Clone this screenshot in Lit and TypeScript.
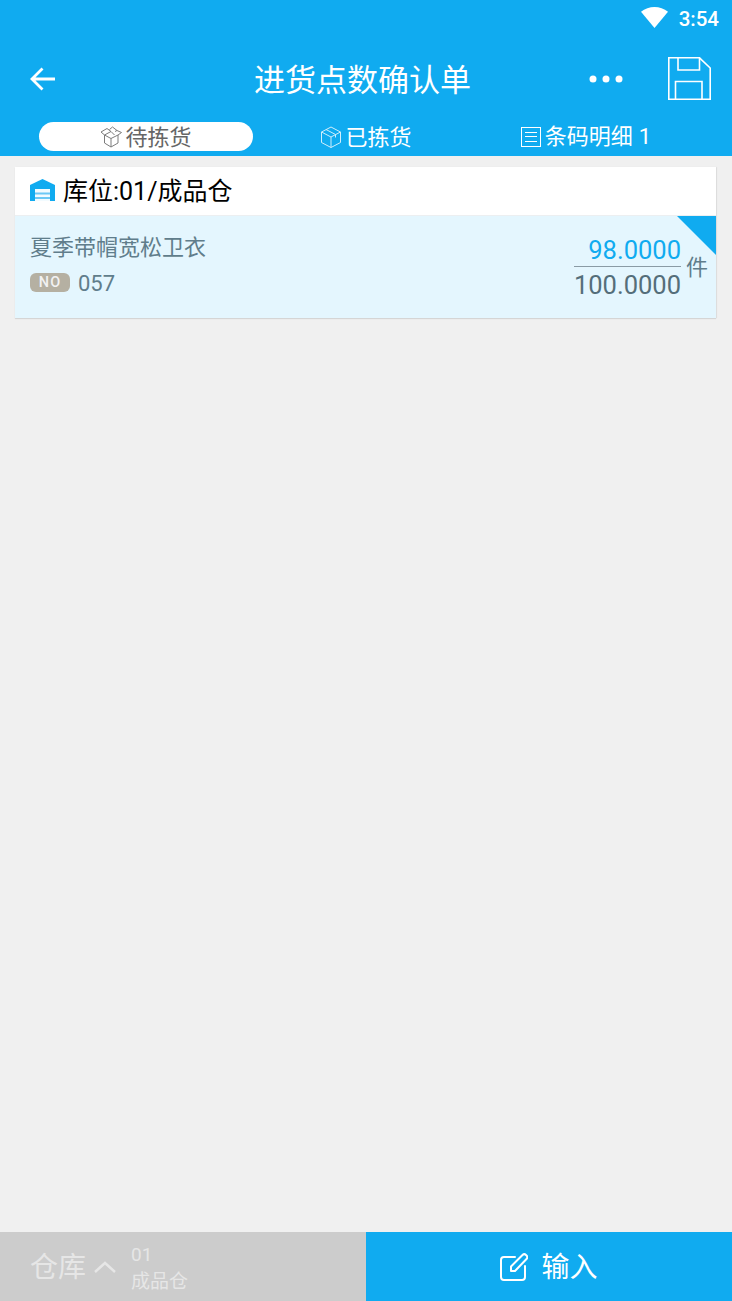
import { LitElement, html, css } from "lit";
import { customElement } from "lit/decorators.js";

const openBox = html`<svg class="tab-icon box-open" viewBox="0 0 22 22" fill="none" stroke="currentColor" stroke-width="1">
  <path d="M4.500 9 11 12.500 18 9M11 12.500V21M4.500 9V17L11 21l7-4V9" />
  <path d="M4.500 9 1 6l6-3.500 4 3-6.500 3.500ZM18 9l3.500-2.500-4.500-2M11 5.500l3.500 3.500M9.500 3.500l3-2.500 4.500 3.500-2 1" />
</svg>`;

const closedBox = html`<svg class="tab-icon box-closed" viewBox="0 0 22 22" fill="none" stroke="currentColor" stroke-width="1">
  <path d="M11 1 20.500 6v10.500L11 21.500 1.500 16.500V6L11 1Z" />
  <path d="M1.500 6 11 11l9.500-5M11 11v10.500M6 3.500l9.500 5v3" />
</svg>`;

const listBox = html`<svg class="tab-icon" viewBox="0 0 20 20" fill="none" stroke="currentColor" stroke-width="1">
  <rect x="0.500" y="0.500" width="19" height="19" />
  <path d="M4 5.500h12M4 9.500h12M4 14.500h12" />
</svg>`;

@customElement("app-root")
export class AppRoot extends LitElement {
  static styles = css`
    :host {
      display: flex;
      flex-direction: column;
      height: 1301px;
      background: #f0f0f0;
      font-family: "Noto Sans CJK SC", Roboto, sans-serif;
      overflow: hidden;
    }
    .top {
      background: #10abf0;
      color: #fff;
      height: 156px;
      flex: none;
      display: flex;
      flex-direction: column;
    }
    .status {
      height: 40px;
      display: flex;
      justify-content: flex-end;
      align-items: center;
      gap: 11px;
      padding-right: 13px;
    }
    .clock {
      font: 500 20.500px Roboto, sans-serif;
      margin-top: -2px;
    }
    .wifi {
      width: 27px;
      height: 21px;
      margin-top: -5px;
    }
    .nav {
      height: 78px;
      position: relative;
      display: flex;
      align-items: center;
      justify-content: center;
    }
    .title {
      font-size: 31px;
      line-height: 44px;
      margin-top: -2px;
      padding-right: 7px;
    }
    .back {
      position: absolute;
      left: 30px;
      top: 27px;
      width: 25px;
      height: 24px;
    }
    .more {
      position: absolute;
      left: 589px;
      top: 34px;
      width: 34px;
      height: 10px;
    }
    .save {
      position: absolute;
      left: 668px;
      top: 17px;
      width: 43px;
      height: 43px;
    }
    .tabs {
      display: grid;
      grid-template-columns: repeat(3, 220px);
      padding: 4px 36px 0;
    }
    .tab {
      height: 29px;
      margin: 0 3px;
      border-radius: 15px;
      display: flex;
      align-items: center;
      justify-content: center;
      gap: 3px;
      font-size: 22px;
      line-height: 29px;
    }
    .tab > span {
      margin-top: -3px;
    }
    .tab.active {
      background: #fff;
      color: #666;
    }
    .tab-icon {
      width: 22px;
      height: 22px;
      flex: none;
    }
    .box-open {
      opacity: 0.85;
    }
    .box-closed {
      opacity: 0.8;
    }
    .tab:last-child {
      gap: 4px;
    }
    .tab:last-child .tab-icon {
      width: 20px;
      height: 20px;
    }
    .num {
      font-family: Roboto, sans-serif;
      margin-left: 6px;
    }
    .main {
      flex: 1;
      padding: 11px 16px 0 15px;
    }
    .card {
      box-shadow: 0 1px 1px rgba(0, 0, 0, 0.1), 1px 0 1px rgba(0, 0, 0, 0.06);
    }
    .card-head {
      height: 48px;
      background: #fff;
      display: flex;
      align-items: center;
      gap: 8px;
      padding-left: 15px;
      color: #000;
      font-family: Roboto, "Noto Sans CJK SC", sans-serif;
      font-size: 25px;
    }
    .card-head span {
      margin-bottom: 4px;
    }
    .card-head svg {
      width: 25px;
      height: 22px;
      flex: none;
      margin-bottom: 2px;
    }
    .row {
      position: relative;
      height: 103px;
      background: #e4f6fe;
      border-top: 1px solid #eceff1;
      box-sizing: border-box;
      display: flex;
      justify-content: space-between;
      padding: 0 8px 0 15px;
    }
    .info {
      display: flex;
      flex-direction: column;
    }
    .name {
      color: #607d8b;
      font-size: 22px;
      line-height: 30px;
      margin-top: 14px;
    }
    .code {
      display: flex;
      align-items: center;
      gap: 8px;
      margin-top: 9px;
      color: #607d8b;
      font: 22px/30px Roboto, sans-serif;
    }
    .badge {
      width: 40px;
      height: 19px;
      margin-top: -3px;
      border-radius: 6px;
      background: #b5b0a2;
      color: #f2f2f2;
      font: 500 14.500px/19px Roboto, sans-serif;
      letter-spacing: 1px;
      text-align: center;
    }
    .qty {
      display: flex;
      align-items: center;
      gap: 5px;
    }
    .fraction {
      display: flex;
      flex-direction: column;
      align-items: flex-end;
      font: 25.500px/32px Roboto, sans-serif;
      margin-top: 1px;
    }
    .picked {
      color: #10abf0;
    }
    .total {
      color: #546e7a;
      border-top: 1px solid #8a9ba5;
      padding-top: 2px;
    }
    .unit {
      color: #607d8b;
      font-size: 22px;
      margin-top: -4px;
    }
    .corner {
      position: absolute;
      top: 0;
      right: 0;
      width: 0;
      height: 0;
      border-top: 39px solid #10abf0;
      border-left: 39px solid transparent;
    }
    .bottom {
      height: 69px;
      flex: none;
      display: grid;
      grid-template-columns: 1fr 1fr;
    }
    .store {
      background: #cccccc;
      color: #e6e6e6;
      display: flex;
      align-items: center;
      padding-left: 30px;
    }
    .store-label {
      font-size: 28px;
      margin-top: -3px;
    }
    .chevron {
      width: 22px;
      height: 14px;
      margin-left: 8px;
      margin-right: 15px;
    }
    .store-value {
      display: flex;
      flex-direction: column;
      font-size: 19px;
      line-height: 25px;
    }
    .store-code {
      font-family: Roboto, sans-serif;
    }
    .input {
      background: #10abf0;
      color: #fff;
      display: flex;
      align-items: center;
      justify-content: center;
      gap: 13px;
      font-size: 28px;
    }
    .input span {
      margin-top: -3px;
    }
    .input svg {
      width: 28px;
      height: 28px;
    }
  `;

  render() {
    return html`
      <header class="top">
        <div class="status">
          <svg class="wifi" viewBox="0 0 27 21"><path d="M0 4.800C3.800 1.700 8.700 0 13.500 0s9.700 1.700 13.500 4.800L13.500 21 0 4.800Z" fill="#fff" /></svg>
          <span class="clock">3:54</span>
        </div>
        <div class="nav">
          <svg class="back" viewBox="0 0 25 24" fill="none" stroke="#fff" stroke-width="2.800">
            <path d="M12.500 1.500 2 12l10.500 10.500M2 12h23" />
          </svg>
          <span class="title">进货点数确认单</span>
          <svg class="more" viewBox="0 0 34 10" fill="#fff">
            <circle cx="4" cy="5" r="3.500" /><circle cx="17" cy="5" r="3.500" /><circle cx="30" cy="5" r="3.500" />
          </svg>
          <svg class="save" viewBox="0 0 43 43" fill="none" stroke="#fff" stroke-width="1.600">
            <path d="M.8.8H31.500L42.200 11V42.200H.8V.8Z" />
            <path d="M10 .8V13H31.500V.8M7.500 42.200V24.500H34V42.200" />
          </svg>
        </div>
        <nav class="tabs">
          <div class="tab active">${openBox}<span>待拣货</span></div>
          <div class="tab">${closedBox}<span>已拣货</span></div>
          <div class="tab">${listBox}<span>条码明细<span class="num">1</span></span></div>
        </nav>
      </header>
      <main class="main">
        <section class="card">
          <div class="card-head">
            <svg viewBox="0 0 25 22">
              <path d="M12.500 0 25 6v16H0V6L12.500 0Z" fill="#10abf0" />
              <path d="M5 10h15v12H5z" fill="#f2fbff" />
              <path d="M5 14.500h15M5 19h15" stroke="#6cc8f5" stroke-width="2" />
            </svg>
            <span>库位:01/成品仓</span>
          </div>
          <div class="row">
            <div class="info">
              <div class="name">夏季带帽宽松卫衣</div>
              <div class="code"><span class="badge">NO</span><span>057</span></div>
            </div>
            <div class="qty">
              <div class="fraction">
                <span class="picked">98.0000</span>
                <span class="total">100.0000</span>
              </div>
              <span class="unit">件</span>
            </div>
            <div class="corner"></div>
          </div>
        </section>
      </main>
      <footer class="bottom">
        <div class="store">
          <span class="store-label">仓库</span>
          <svg class="chevron" viewBox="0 0 22 14" fill="none" stroke="#e6e6e6" stroke-width="2.500">
            <path d="M1 12 11 3l10 9" />
          </svg>
          <div class="store-value"><span class="store-code">01</span><span>成品仓</span></div>
        </div>
        <div class="input">
          <svg viewBox="0 0 28 28" fill="none" stroke="#fff" stroke-width="2" stroke-linecap="round" stroke-linejoin="round">
            <path d="M15 4H4a3 3 0 0 0-3 3v17a3 3 0 0 0 3 3h18a3 3 0 0 0 3-3V13" />
            <path d="M11 18V13.500L22.500 2a2.500 2.500 0 0 1 3.500 0l.5.500a2.500 2.500 0 0 1 0 3.500L15 18h-4Z" />
          </svg>
          <span>输入</span>
        </div>
      </footer>
    `;
  }
}
